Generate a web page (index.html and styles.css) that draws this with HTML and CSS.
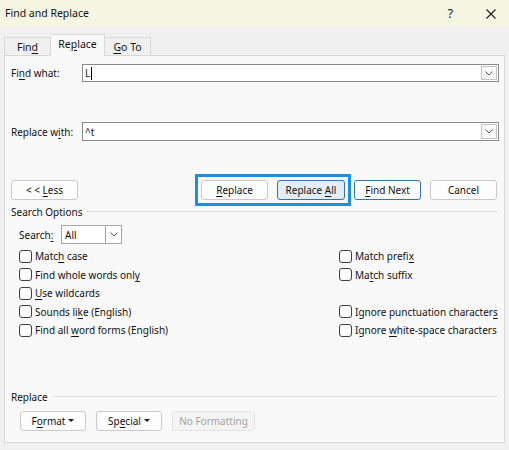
FILE: index.html
```html
<!DOCTYPE html>
<html>
<head>
<meta charset="utf-8">
<link rel="stylesheet" href="styles.css">
</head>
<body>
<div class="window">
  <div class="titlebar">
    <span class="title">Find and Replace</span>
    <span class="tb-help">?</span>
    <svg class="tb-close" width="10" height="10" viewBox="0 0 10 10"><path d="M0.5 0.5L9.5 9.5M9.5 0.5L0.5 9.5" stroke="#1a1a1a" stroke-width="1.1" fill="none"/></svg>
  </div>
  <div class="client">
    <div class="tabs">
      <div class="tab"><span>Fin<u>d</u></span></div>
      <div class="tab active"><span>Re<u>p</u>lace</span></div>
      <div class="tab"><span><u>G</u>o To</span></div>
    </div>
    <div class="panel">
      <div class="field-row first">
        <span class="label">Fi<u>n</u>d what:</span>
        <div class="combo">
          <span class="combo-text"><span>L</span><span class="caret"></span></span>
          <span class="combo-btn"><svg width="8" height="5" viewBox="0 0 8 5"><path d="M0.5 0.5L4 4L7.5 0.5" stroke="#555" fill="none"/></svg></span>
        </div>
      </div>
      <div class="field-row second">
        <span class="label">Replace w<u>i</u>th:</span>
        <div class="combo">
          <span class="combo-text"><span>^t</span></span>
          <span class="combo-btn"><svg width="8" height="5" viewBox="0 0 8 5"><path d="M0.5 0.5L4 4L7.5 0.5" stroke="#555" fill="none"/></svg></span>
        </div>
      </div>
      <div class="button-row">
        <button class="btn"><span>&lt; &lt; <u>L</u>ess</span></button>
        <div class="spacer"></div>
        <div class="focus-group">
          <button class="btn"><span><u>R</u>eplace</span></button>
          <button class="btn focused"><span>Replace <u>A</u>ll</span></button>
        </div>
        <button class="btn default"><span><u>F</u>ind Next</span></button>
        <button class="btn"><span>Cancel</span></button>
      </div>
      <div class="section-head"><span>Search Options</span><span class="rule"></span></div>
      <div class="search-row">
        <span class="label-small">Search<u>:</u></span>
        <div class="select">
          <span class="select-text"><span>All</span></span>
          <span class="select-btn"><svg width="8" height="5" viewBox="0 0 8 5"><path d="M0.5 0.5L4 4L7.5 0.5" stroke="#555" fill="none"/></svg></span>
        </div>
      </div>
      <div class="options">
        <div class="opt"><span class="cb"></span><span>Matc<u>h</u> case</span></div>
        <div class="opt"><span class="cb"></span><span>Match prefi<u>x</u></span></div>
        <div class="opt"><span class="cb"></span><span>Find whole words onl<u>y</u></span></div>
        <div class="opt"><span class="cb"></span><span>Ma<u>t</u>ch suffix</span></div>
        <div class="opt"><span class="cb"></span><span><u>U</u>se wildcards</span></div>
        <div class="opt empty"></div>
        <div class="opt"><span class="cb"></span><span>Sounds li<u>k</u>e (English)</span></div>
        <div class="opt"><span class="cb"></span><span>Ignore punctuation character<u>s</u></span></div>
        <div class="opt"><span class="cb"></span><span>Find all <u>w</u>ord forms (English)</span></div>
        <div class="opt"><span class="cb"></span><span>Ignore <u>w</u>hite-space characters</span></div>
      </div>
      <div class="section-head replace-head"><span>Replace</span><span class="rule"></span></div>
      <div class="bottom-row">
        <button class="btn menu"><span>F<u>o</u>rmat</span><span class="tri"></span></button>
        <button class="btn menu"><span>Sp<u>e</u>cial</span><span class="tri"></span></button>
        <button class="btn disabled"><span>No Formatting</span></button>
      </div>
    </div>
  </div>
</div>
</body>
</html>
```
FILE: styles.css
```css
* { box-sizing: border-box; }
html, body { margin: 0; padding: 0; }
body {
  width: 509px;
  height: 450px;
  background: #f0f0f0;
  font-family: "Noto Sans", "Open Sans", sans-serif;
  font-size: 10px;
  color: #111;
  overflow: hidden;
}
u { text-decoration: underline; text-underline-offset: 2px; text-decoration-thickness: 1px; }
.window { display: flex; flex-direction: column; height: 450px; }
.titlebar {
  height: 27px;
  background: #f5f5e1;
  display: flex;
  align-items: center;
  padding-left: 5px;
  padding-right: 13px;
}
.title { font-size: 10.5px; flex: 1; padding-bottom: 1px; }
.tb-help { font-size: 12px; margin-right: 33px; }
.tb-close { display: block; }
.client { padding: 7px 4px 7px 4px; flex: 1; display: flex; flex-direction: column; }
.tabs { display: flex; align-items: flex-end; height: 21px; }
.tab {
  height: 18px;
  border: 1px solid #d9d9d9;
  border-bottom: none;
  background: #f0f0f0;
  display: flex;
  align-items: center;
  justify-content: center;
  font-size: 10.5px;
}
.tab:nth-child(1) { width: 47px; }
.tab:nth-child(2) { width: 54px; }
.tab:nth-child(3) { width: 46px; border-left: none; }
.tab.active {
  height: 22px;
  background: #f9f9f9;
  border-left: none;
  position: relative;
  top: 1px;
  padding-bottom: 3px;
}
.panel {
  flex: 1;
  background: #f9f9f9;
  border: 1px solid #d9d9d9;
  padding: 0 5px 0 6px;
  display: flex;
  flex-direction: column;
}
.field-row { display: flex; align-items: center; height: 18px; }
.field-row.first { margin-top: 8px; }
.field-row.second { margin-top: 40px; height: 19px; }
.label { width: 71px; }
.combo {
  flex: 1;
  height: 100%;
  background: #fff;
  border: 1px solid #8a8a8a;
  display: flex;
  align-items: stretch;
}
.combo-text { flex: 1; padding-left: 2px; display: flex; align-items: center; }
.caret { display: inline-block; width: 1px; height: 13px; background: #000; margin-left: 1px; }
.combo-btn {
  width: 16px;
  margin: 1px;
  border: 1px solid #c4c4c4;
  background: #fafafa;
  display: flex;
  align-items: center;
  justify-content: center;
}
.button-row { display: flex; align-items: center; margin-top: 39px; height: 20px; }
.spacer { flex: 1; }
.btn {
  font-family: inherit;
  font-size: 10px;
  color: #111;
  width: 67px;
  height: 20px;
  padding: 0;
  background: #fdfdfd;
  border: 1px solid #c9c9c9;
  border-radius: 3px;
  display: inline-flex;
  align-items: center;
  justify-content: center;
}
.focus-group {
  display: flex;
  gap: 9px;
  outline: 3px solid #1a8fe6;
  outline-offset: 3px;
  margin-right: 9px;
}
.btn.focused { width: 68px; background: #e1eef9; border-color: #3572b5; }
.btn.default { border-color: #3572b5; margin-right: 9px; }
.button-row > .btn:last-child { margin-right: 2px; }
.section-head {
  display: flex;
  align-items: center;
  gap: 5px;
  height: 14px;
  margin-top: 5px;
  margin-right: 2px;
}
.rule { flex: 1; border-top: 1px solid #dcdcdc; margin-top: -1px; }
.search-row { display: flex; align-items: center; margin-top: 6px; padding-left: 8px; height: 19px; }
.label-small { width: 42px; }
.select {
  width: 61px;
  height: 19px;
  background: #fff;
  border: 1px solid #a6a6a6;
  display: flex;
  align-items: stretch;
}
.select-text { flex: 1; padding-left: 3px; display: flex; align-items: center; }
.select-btn {
  width: 16px;
  border-left: 1px solid #a6a6a6;
  display: flex;
  align-items: center;
  justify-content: center;
}
.options {
  display: grid;
  grid-template-columns: 320px 1fr;
  grid-auto-rows: 18.5px;
  margin-top: 3px;
  padding-left: 8px;
}
.opt { display: flex; align-items: center; }
.cb {
  width: 13px;
  height: 13px;
  border: 1px solid #404040;
  border-radius: 3px;
  background: #fbfbfb;
  margin-right: 3px;
}
.replace-head { margin-top: 50px; }
.bottom-row { display: flex; gap: 10px; margin-top: 7px; padding-left: 9px; }
.btn.menu { width: 66px; }
.tri {
  display: inline-block;
  width: 0;
  height: 0;
  border-left: 3px solid transparent;
  border-right: 3px solid transparent;
  border-top: 3px solid #1a1a1a;
  margin-left: 3px;
  margin-bottom: 1px;
}
.btn.disabled { width: 83px; background: #f4f4f4; border-color: #e3e3e3; color: #a3a3a3; }
```
